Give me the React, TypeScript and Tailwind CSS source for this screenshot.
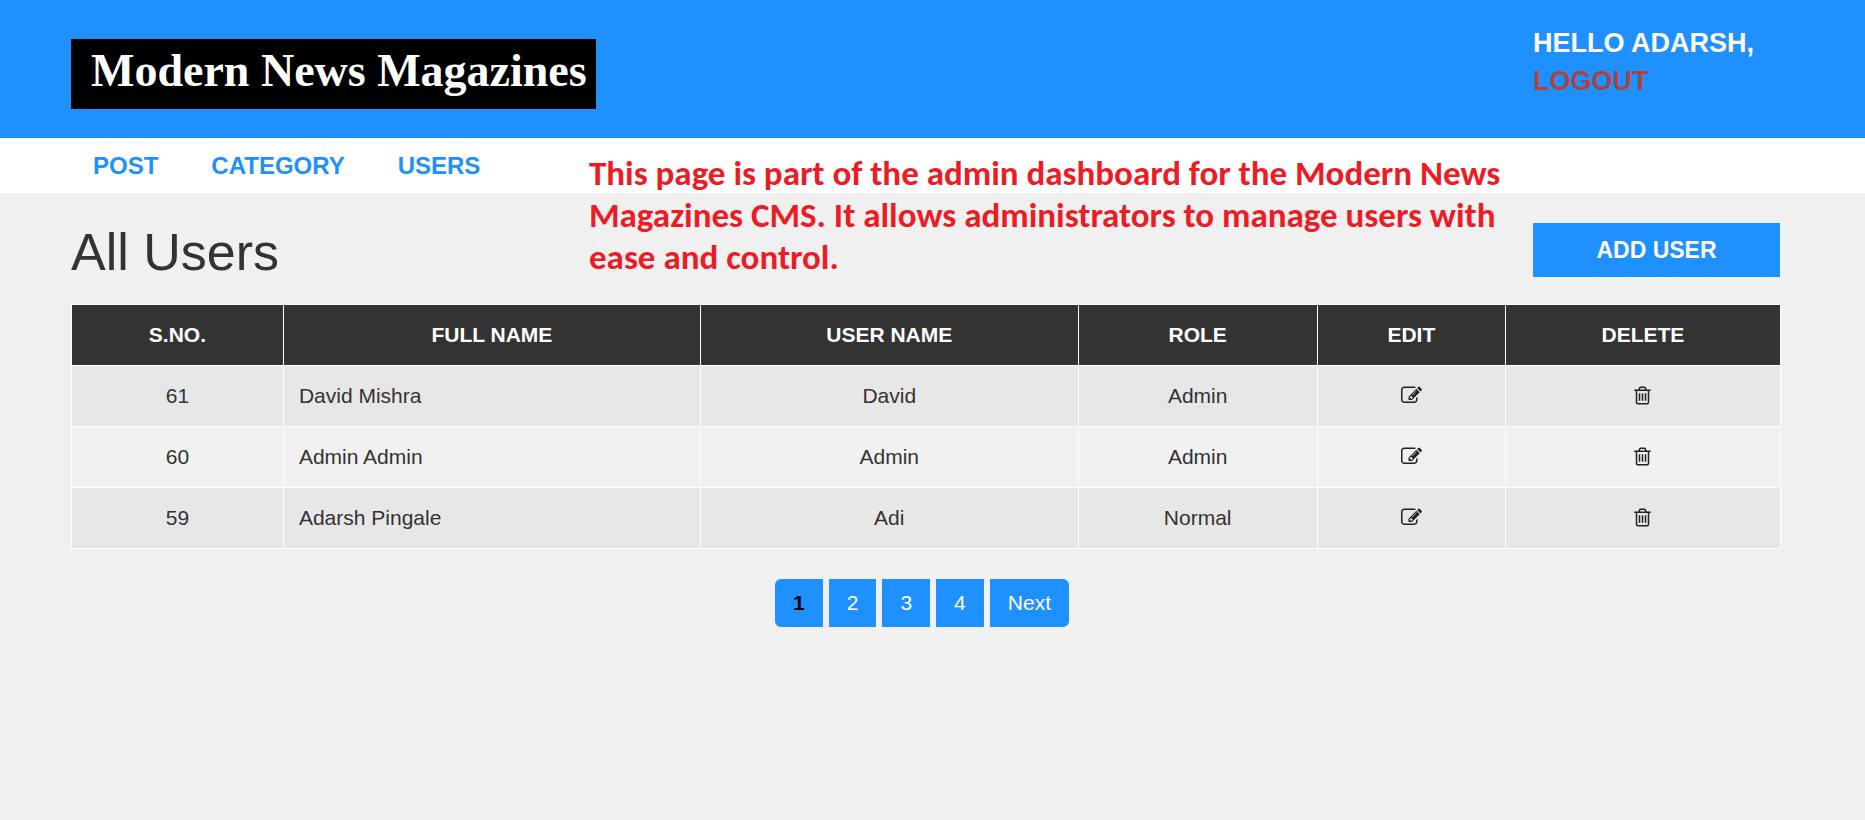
const EDIT_PATH =
  'M888 1184l116-116-152-152-116 116v56h96v96h56zm440-720q-16-16-33 1l-350 350q-17 17-1 33t33-1l350-350q17-17 1-33zm80 594v190q0 119-84.5 203.5t-203.5 84.5h-832q-119 0-203.5-84.5t-84.5-203.5v-832q0-119 84.5-203.5t203.5-84.5h832q63 0 117 25 15 7 18 23 3 17-9 29l-49 49q-14 14-32 8-23-6-45-6h-832q-66 0-113 47t-47 113v832q0 66 47 113t113 47h832q66 0 113-47t47-113v-126q0-13 9-22l64-64q15-15 35-7t20 29zm-96-738l288 288-672 672h-288v-288zm444 132l-92 92-288-288 92-92q28-28 68-28t68 28l152 152q28 28 28 68t-28 68z';
const TRASH_PATH =
  'M704 736v576q0 14-9 23t-23 9h-64q-14 0-23-9t-9-23v-576q0-14 9-23t23-9h64q14 0 23 9t9 23zm256 0v576q0 14-9 23t-23 9h-64q-14 0-23-9t-9-23v-576q0-14 9-23t23-9h64q14 0 23 9t9 23zm256 0v576q0 14-9 23t-23 9h-64q-14 0-23-9t-9-23v-576q0-14 9-23t23-9h64q14 0 23 9t9 23zm128 724v-948h-896v948q0 22 7 40.5t14.5 27 10.5 8.5h832q3 0 10.5-8.5t14.5-27 7-40.5zm-672-1076h448l-48-117q-7-9-17-11h-317q-10 2-17 11zm928 32v64q0 14-9 23t-23 9h-96v948q0 83-47 143.5t-113 60.5h-832q-66 0-113-58.5t-47-141.5v-952h-96q-14 0-23-9t-9-23v-64q0-14 9-23t23-9h309l70-167q15-37 54-63t79-26h320q40 0 79 26t54 63l70 167h309q14 0 23 9t9 23z';

type User = { id: number; name: string; username: string; role: string };

const users: User[] = [
  { id: 61, name: 'David Mishra', username: 'David', role: 'Admin' },
  { id: 60, name: 'Admin Admin', username: 'Admin', role: 'Admin' },
  { id: 59, name: 'Adarsh Pingale', username: 'Adi', role: 'Normal' },
];

const columns = [
  { label: 'S.NO.', width: 'w-[12.4%]' },
  { label: 'FULL NAME', width: 'w-[24.4%]' },
  { label: 'USER NAME', width: 'w-[22.1%]' },
  { label: 'ROLE', width: 'w-[14%]' },
  { label: 'EDIT', width: 'w-[11%]' },
  { label: 'DELETE', width: 'w-[16.1%]' },
];

const menu = ['POST', 'CATEGORY', 'USERS'];
const pages = ['1', '2', '3', '4', 'Next'];

function IconLink({ path, label }: { path: string; label: string }) {
  return (
    <a href="#" aria-label={label} className="flex h-[30px] justify-center pt-1 text-[#222222]">
      <svg viewBox="0 0 1792 1792" className="size-[21px]" fill="currentColor" aria-hidden="true">
        <path d={path} />
      </svg>
    </a>
  );
}

function Header() {
  return (
    <header className="flex h-[138px] items-start justify-between bg-[#1e90ff] pl-[71px] pr-[85px]">
      <a
        href="#"
        className="mt-[39px] flex h-[70px] w-[525px] bg-black pl-5 font-['Liberation_Serif',serif] text-[46px] leading-[64px] font-bold whitespace-nowrap text-white"
      >
        Modern News Magazines
      </a>
      <div className="mt-6 w-[247px] text-[27px] leading-[38px] font-bold whitespace-nowrap text-white">
        <p>HELLO ADARSH,</p>
        <a href="#" className="text-[#a94442]">
          LOGOUT
        </a>
      </div>
    </header>
  );
}

function Menu() {
  return (
    <nav className="h-[55px] bg-white pl-[93px]">
      <ul className="flex gap-[53px] text-[24px] leading-[55px] font-bold text-[#1e90ff]">
        {menu.map((item) => (
          <li key={item}>
            <a href="#">{item}</a>
          </li>
        ))}
      </ul>
    </nav>
  );
}

function UsersTable() {
  return (
    <table className="w-full table-fixed border-collapse text-center text-[21px] leading-[30px]">
      <thead>
        <tr className="bg-[#333333] text-white">
          {columns.map((column) => (
            <th key={column.label} className={`border border-white p-[15px] font-bold ${column.width}`}>
              {column.label}
            </th>
          ))}
        </tr>
      </thead>
      <tbody>
        {users.map((user) => (
          <tr key={user.id} className="odd:bg-[#e7e7e7] even:bg-[#f1f1f1]">
            <td className="border border-white p-[15px]">{user.id}</td>
            <td className="border border-white p-[15px] text-left">{user.name}</td>
            <td className="border border-white p-[15px]">{user.username}</td>
            <td className="border border-white p-[15px]">{user.role}</td>
            <td className="border border-white p-[15px]">
              <IconLink path={EDIT_PATH} label={`Edit ${user.name}`} />
            </td>
            <td className="border border-white p-[15px]">
              <IconLink path={TRASH_PATH} label={`Delete ${user.name}`} />
            </td>
          </tr>
        ))}
      </tbody>
    </table>
  );
}

function Pagination() {
  return (
    <ul className="mt-[30px] mr-2 flex justify-center gap-[6px] text-[21px] leading-[48px] text-white">
      {pages.map((page) => (
        <li key={page} className="group">
          <a
            href="#"
            className="block bg-[#1e90ff] px-[18px] group-first:rounded-l-md group-first:font-bold group-first:text-black group-last:rounded-r-md"
          >
            {page}
          </a>
        </li>
      ))}
    </ul>
  );
}

export default function App() {
  return (
    <div className="relative min-h-screen bg-[#f0f0f0] font-['Liberation_Sans',Arial,sans-serif] text-[#333333]">
      <Header />
      <Menu />
      <main className="pt-[30px] pr-[84px] pl-[71px]">
        <div className="mb-[27px] flex h-[54px] items-start justify-between pr-px">
          <h1 className="text-[52px] leading-[58px]">All Users</h1>
          <a
            href="#"
            className="w-[247px] bg-[#1e90ff] text-center text-[23px] leading-[54px] font-bold text-white"
          >
            ADD USER
          </a>
        </div>
        <UsersTable />
        <Pagination />
      </main>
      <p className="absolute top-[152px] left-[589px] w-[930px] font-[Carlito,Lato,sans-serif] text-[35px] leading-[42px] font-bold text-[#ed1c24]">
        This page is part of the admin dashboard for the Modern News Magazines CMS. It allows administrators to
        manage users with ease and control.
      </p>
    </div>
  );
}
